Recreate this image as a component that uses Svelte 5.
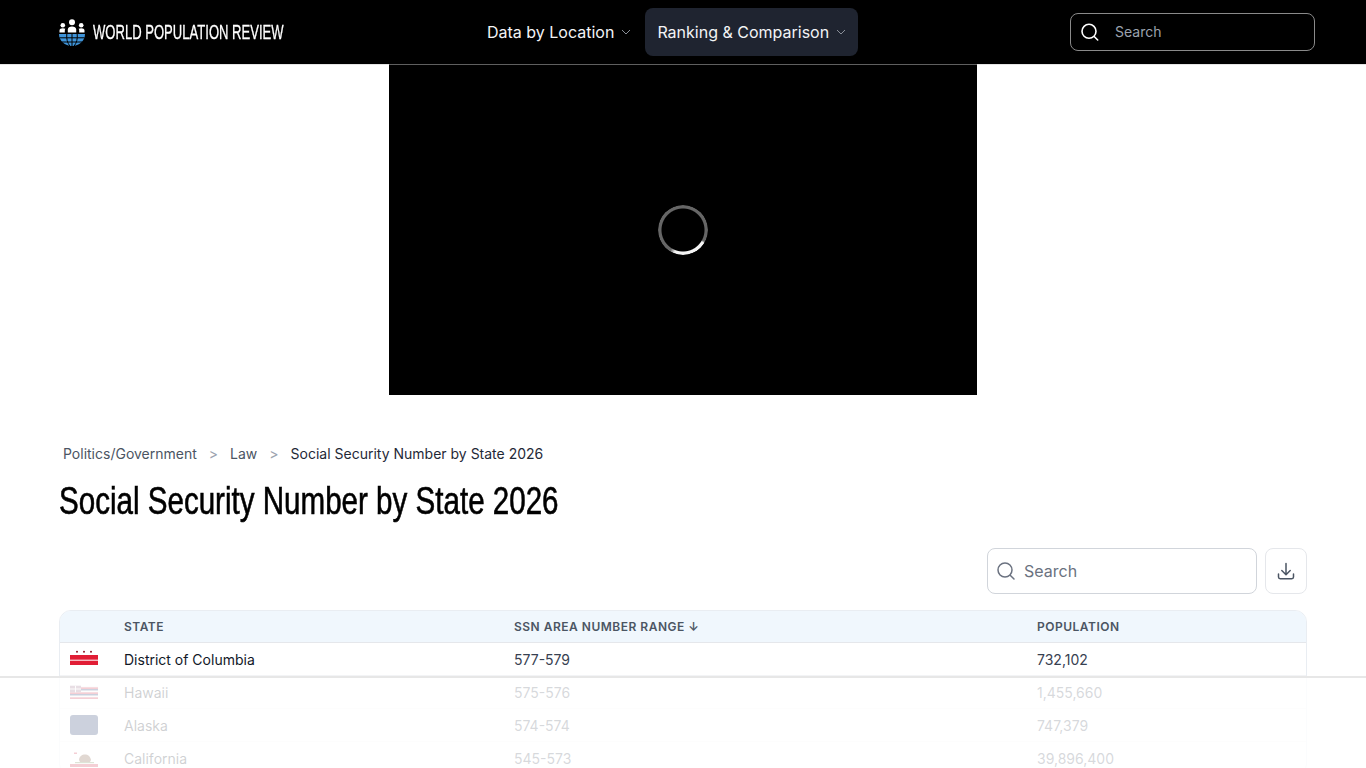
<script>
  const rows = [
    { state: 'District of Columbia', range: '577-579', pop: '732,102', flag: 'dc' },
    { state: 'Hawaii', range: '575-576', pop: '1,455,660', flag: 'hi' },
    { state: 'Alaska', range: '574-574', pop: '747,379', flag: 'ak' },
    { state: 'California', range: '545-573', pop: '39,896,400', flag: 'ca' }
  ];
</script>

<div class="page">
  <header class="topbar">
    <div class="brand">
      <svg class="logo" viewBox="0 0 26 27" width="26" height="27" aria-hidden="true">
        <circle cx="13" cy="3.300" r="3" fill="#fff" />
        <circle cx="3.800" cy="6.300" r="2.300" fill="#fff" />
        <circle cx="22.200" cy="6.300" r="2.300" fill="#fff" />
        <path d="M8.800 13.500v-3c0-1.800 1.800-3 4.200-3s4.200 1.200 4.200 3v3z" fill="#fff" />
        <path d="M.5 13.500v-2c0-1.500 1.400-2.300 3.300-2.300.9 0 1.800.2 2.600.6-.4.5-.6 1-.6 1.600v2.100zM25.500 13.500v-2c0-1.500-1.400-2.300-3.300-2.300-.9 0-1.800.2-2.600.6.4.5.6 1 .6 1.600v2.100z" fill="#fff" />
        <path d="M0 15h26C26 21.800 20.200 27 13 27S0 21.800 0 15z" fill="#3f94d9" />
        <path d="M.5 18.800h25M2.800 23h20.400M13 15v12M7.800 15c-.5 4.500.5 8.700 3 12M18.200 15c.5 4.500-.5 8.700-3 12" stroke="#000" stroke-width="1" fill="none" />
      </svg>
      <span class="brand-name">WORLD POPULATION REVIEW</span>
    </div>

    <nav class="nav">
      <button type="button" class="nav-item">
        Data by Location
        <svg class="chev" viewBox="0 0 10 6" width="10" height="6"><path d="M1 1l4 4 4-4" /></svg>
      </button>
      <button type="button" class="nav-item active">
        Ranking &amp; Comparison
        <svg class="chev" viewBox="0 0 10 6" width="10" height="6"><path d="M1 1l4 4 4-4" /></svg>
      </button>
    </nav>

    <div class="top-search">
      <svg viewBox="0 0 20 20" width="20" height="20" fill="none" stroke="#fff" stroke-width="1.600" stroke-linecap="round">
        <circle cx="9" cy="9.300" r="7" />
        <path d="M14.200 14.500l3.500 3.500" />
      </svg>
      <span>Search</span>
    </div>
  </header>

  <div class="video-wrap">
    <div class="video">
      <div class="spinner"></div>
    </div>
  </div>

  <main class="content">
    <div class="crumbs">
      <span>Politics/Government</span>
      <span class="sep">&gt;</span>
      <span>Law</span>
      <span class="sep">&gt;</span>
      <span class="current">Social Security Number by State 2026</span>
    </div>

    <h1>Social Security Number by State 2026</h1>

    <div class="tools">
      <div class="table-search">
        <svg viewBox="0 0 20 20" width="20" height="20" fill="none" stroke="#6b7280" stroke-width="1.500" stroke-linecap="round">
          <circle cx="9" cy="9" r="7" />
          <path d="M14.200 14.200l3.800 3.800" />
        </svg>
        <span>Search</span>
      </div>
      <button type="button" class="download" aria-label="Download">
        <svg viewBox="0 0 20 20" width="20" height="20" fill="none" stroke="#4b5563" stroke-width="1.500" stroke-linecap="round" stroke-linejoin="round">
          <path d="M10 2.500v11M5.800 9.500l4.200 4.200 4.200-4.200M2.500 13v3c0 1 .7 1.700 1.700 1.700h11.600c1 0 1.700-.7 1.700-1.700v-3" />
        </svg>
      </button>
    </div>

    <div class="table">
      <div class="row head">
        <div></div>
        <div>STATE</div>
        <div>SSN AREA NUMBER RANGE <span class="arrow">↓</span></div>
        <div>POPULATION</div>
      </div>
      {#each rows as r}
        <div class="row">
          <div class="flag-cell">
            {#if r.flag === 'dc'}
              <svg class="flag" viewBox="0 0 28 18">
                <rect x="0" y="5" width="28" height="4.700" fill="#e11d35" />
                <rect x="0" y="10.700" width="28" height="4.300" fill="#e11d35" />
                <circle cx="7" cy="1.700" r="1" fill="#8f1a28" />
                <circle cx="14" cy="1.700" r="1" fill="#8f1a28" />
                <circle cx="21" cy="1.700" r="1" fill="#8f1a28" />
              </svg>
            {:else if r.flag === 'hi'}
              <svg class="flag" viewBox="0 0 28 18">
                <rect x="0" y="2.700" width="28" height="1.600" fill="#f4f4f4" />
                <rect x="0" y="4.300" width="28" height="1.700" fill="#c8102e" />
                <rect x="0" y="6" width="28" height="1.700" fill="#001a5c" />
                <rect x="0" y="7.700" width="28" height="1.600" fill="#f4f4f4" />
                <rect x="0" y="9.300" width="28" height="1.700" fill="#c8102e" />
                <rect x="0" y="11" width="28" height="1.700" fill="#001a5c" />
                <rect x="0" y="12.700" width="28" height="1.600" fill="#f4f4f4" />
                <rect x="0" y="14.300" width="28" height="1.700" fill="#c8102e" />
                <rect x="0" y="2.700" width="11" height="6.600" fill="#8b5a78" />
                <path d="M0 6h11M5.500 2.700v6.600" stroke="#f4f4f4" stroke-width="1" />
              </svg>
            {:else if r.flag === 'ak'}
              <svg class="flag tall" viewBox="0 0 28 20">
                <rect x="0" y="0" width="28" height="20" rx="3" fill="#001a56" />
              </svg>
            {:else}
              <svg class="flag" viewBox="0 0 28 18">
                <rect x="0" y="15" width="28" height="3" fill="#c8102e" />
                <path d="M9 11c0-3.500 3-5.500 6-5.500s5 1.500 6 5.500l-1 2H10z" fill="#6b3d22" />
                <rect x="5" y="13" width="19" height="1.200" fill="#5a7a3a" />
                <rect x="4" y="3.500" width="3" height="1.500" fill="#c8102e" />
              </svg>
            {/if}
          </div>
          <div class="state">{r.state}</div>
          <div>{r.range}</div>
          <div>{r.pop}</div>
        </div>
      {/each}
    </div>
  </main>

  <div class="veil"></div>
</div>

<style>
  :global(body) {
    margin: 0;
    background: #fff;
  }

  .page {
    position: relative;
    height: 768px;
    overflow: hidden;
    font-family: Inter, "Liberation Sans", sans-serif;
    color: #111827;
  }

  .topbar {
    height: 64px;
    background: #000;
    display: grid;
    grid-template-columns: 416px auto 1fr;
    align-items: center;
    padding: 0 51px 0 59px;
    box-shadow: 0 1px 0 rgba(0, 0, 0, 0.1);
    position: relative;
    z-index: 1;
  }

  .brand {
    display: flex;
    align-items: center;
    gap: 8px;
    min-width: 0;
  }

  .logo {
    flex: none;
  }

  /* no condensed family installed, so squeeze Liberation Sans to Oswald's width */
  .brand-name {
    font-family: "Liberation Sans", sans-serif;
    color: #fff;
    font-size: 21px;
    white-space: nowrap;
    transform: scaleX(0.622);
    transform-origin: left center;
    -webkit-text-stroke: 0.3px #fff;
  }

  .nav {
    display: flex;
    align-items: center;
    gap: 2px;
  }

  .nav-item {
    height: 48px;
    padding: 0 12px;
    display: flex;
    align-items: center;
    gap: 7px;
    background: transparent;
    border: 0;
    border-radius: 8px;
    color: #f3f4f6;
    font: 400 16px Inter, "Liberation Sans", sans-serif;
  }

  .nav-item.active {
    background: #1f2430;
  }

  .chev {
    fill: none;
    stroke: #8a8f98;
    stroke-width: 1;
  }

  .top-search {
    justify-self: end;
    width: 245px;
    height: 38px;
    box-sizing: border-box;
    border: 1px solid #8a8a8a;
    border-radius: 8px;
    display: flex;
    align-items: center;
    gap: 15px;
    padding: 0 0 1px 9px;
    color: #9ca3af;
    font-size: 14px;
  }

  .video-wrap {
    display: flex;
    justify-content: center;
  }

  .video {
    width: 588px;
    height: 331px;
    background: #000;
    border-top: 1px solid #6a6a6a;
    box-sizing: border-box;
    display: flex;
    align-items: center;
    justify-content: center;
  }

  .spinner {
    width: 50px;
    height: 50px;
    border-radius: 50%;
    background: conic-gradient(#666 0 118deg, #f4f4f4 122deg 200deg, #666 212deg);
    -webkit-mask: radial-gradient(closest-side, transparent 21px, #000 22px);
    mask: radial-gradient(closest-side, transparent 21px, #000 22px);
  }

  .content {
    padding: 47px 59px 0;
  }

  .crumbs {
    display: flex;
    align-items: center;
    padding-left: 4px;
    height: 22px;
    font-size: 14px;
    color: #4b5563;
  }

  .sep {
    color: #9ca3af;
    margin: 0 12px;
  }

  .current {
    color: #1f2937;
  }

  h1 {
    font-family: "Liberation Sans", sans-serif;
    font-weight: 400;
    font-size: 38px;
    line-height: 48px;
    margin: 13px 0 0;
    color: #000;
    white-space: nowrap;
    transform: scaleX(0.778);
    transform-origin: left center;
    -webkit-text-stroke: 0.6px #000;
  }

  .tools {
    display: flex;
    justify-content: flex-end;
    gap: 8px;
    margin-top: 23px;
  }

  .table-search {
    width: 270px;
    height: 46px;
    box-sizing: border-box;
    border: 1px solid #d1d5db;
    border-radius: 8px;
    display: flex;
    align-items: center;
    gap: 8px;
    padding-left: 8px;
    color: #6b7280;
    font-size: 16px;
  }

  .download {
    width: 42px;
    height: 46px;
    padding: 0;
    background: #fff;
    border: 1px solid #e5e7eb;
    border-radius: 8px;
    display: flex;
    align-items: center;
    justify-content: center;
  }

  .table {
    margin-top: 16px;
    border: 1px solid #e9edf2;
    border-radius: 12px;
    overflow: hidden;
    font-size: 14px;
  }

  .row {
    display: grid;
    grid-template-columns: 64px 390px 523px 1fr;
    align-items: center;
    height: 33px;
    box-sizing: border-box;
    border-bottom: 1px solid #f3f4f6;
    color: #374151;
  }

  .row.head {
    height: 32px;
    background: #f0f7fd;
    color: #4b5563;
    font-size: 12px;
    font-weight: 600;
    letter-spacing: 0.5px;
    border-bottom-color: #e5e7eb;
  }

  .arrow {
    font-size: 12px;
  }

  .state {
    color: #111827;
  }

  .flag-cell {
    display: flex;
    padding-left: 10px;
  }

  .flag {
    width: 28px;
    height: 18px;
    display: block;
  }

  .flag.tall {
    height: 20px;
  }

  .veil {
    position: absolute;
    left: 0;
    right: 0;
    top: 676px;
    bottom: 0;
    background: rgba(255, 255, 255, 0.8);
    border-top: 2px solid #e7e7e7;
  }
</style>
